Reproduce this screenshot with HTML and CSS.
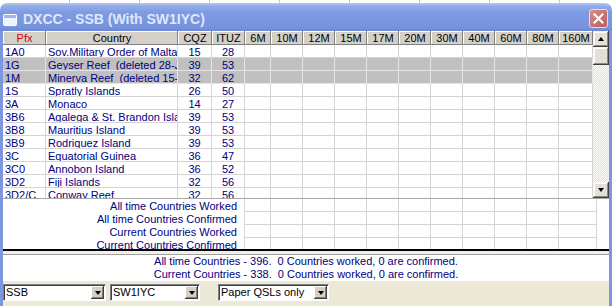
FILE: index.html
```html
<!DOCTYPE html>
<html>
<head>
<meta charset="utf-8">
<title>DXCC - SSB</title>
<link rel="stylesheet" href="styles.css">
</head>
<body>
<div class="backdrop"></div>
<div class="window">
  <div class="titlebar">
    <svg class="app-icon" width="14" height="12" viewBox="0 0 14 12">
      <rect x="0.5" y="0.5" width="13" height="11" rx="1" fill="#eef3fc" stroke="#ffffff"/>
      <rect x="1" y="1" width="12" height="3" fill="#9fb8ee"/>
    </svg>
    <span class="title">DXCC - SSB (With SW1IYC)</span>
    <div class="close">
      <svg width="11" height="11" viewBox="0 0 11 11"><path d="M1.5 1.5 L9.5 9.5 M9.5 1.5 L1.5 9.5" stroke="#ffffff" stroke-width="2.2" stroke-linecap="square"/></svg>
    </div>
  </div>
  <div class="frame">
    <div class="main">
      <div class="grid">
        <div class="row head">
          <div class="h pfx">Pfx</div><div class="h">Country</div><div class="h">CQZ</div><div class="h">ITUZ</div>
          <div class="h">6M</div><div class="h">10M</div><div class="h">12M</div><div class="h">15M</div><div class="h">17M</div><div class="h">20M</div><div class="h">30M</div><div class="h">40M</div><div class="h">60M</div><div class="h">80M</div><div class="h">160M</div>
        </div>
        <div class="row"><div class="c">1A0</div><div class="c">Sov.Military Order of Malta</div><div class="c n">15</div><div class="c n">28</div><div class="c"></div><div class="c"></div><div class="c"></div><div class="c"></div><div class="c"></div><div class="c"></div><div class="c"></div><div class="c"></div><div class="c"></div><div class="c"></div><div class="c"></div></div>
        <div class="row sel"><div class="c">1G</div><div class="c">Geyser Reef&nbsp; (deleted 28-Jun-1974)</div><div class="c n">39</div><div class="c n">53</div><div class="c"></div><div class="c"></div><div class="c"></div><div class="c"></div><div class="c"></div><div class="c"></div><div class="c"></div><div class="c"></div><div class="c"></div><div class="c"></div><div class="c"></div></div>
        <div class="row sel"><div class="c">1M</div><div class="c">Minerva Reef&nbsp; (deleted 15-Jun-1972)</div><div class="c n">32</div><div class="c n">62</div><div class="c"></div><div class="c"></div><div class="c"></div><div class="c"></div><div class="c"></div><div class="c"></div><div class="c"></div><div class="c"></div><div class="c"></div><div class="c"></div><div class="c"></div></div>
        <div class="row"><div class="c">1S</div><div class="c">Spratly Islands</div><div class="c n">26</div><div class="c n">50</div><div class="c"></div><div class="c"></div><div class="c"></div><div class="c"></div><div class="c"></div><div class="c"></div><div class="c"></div><div class="c"></div><div class="c"></div><div class="c"></div><div class="c"></div></div>
        <div class="row"><div class="c">3A</div><div class="c">Monaco</div><div class="c n">14</div><div class="c n">27</div><div class="c"></div><div class="c"></div><div class="c"></div><div class="c"></div><div class="c"></div><div class="c"></div><div class="c"></div><div class="c"></div><div class="c"></div><div class="c"></div><div class="c"></div></div>
        <div class="row"><div class="c">3B6</div><div class="c">Agalega &amp; St. Brandon Islands</div><div class="c n">39</div><div class="c n">53</div><div class="c"></div><div class="c"></div><div class="c"></div><div class="c"></div><div class="c"></div><div class="c"></div><div class="c"></div><div class="c"></div><div class="c"></div><div class="c"></div><div class="c"></div></div>
        <div class="row"><div class="c">3B8</div><div class="c">Mauritius Island</div><div class="c n">39</div><div class="c n">53</div><div class="c"></div><div class="c"></div><div class="c"></div><div class="c"></div><div class="c"></div><div class="c"></div><div class="c"></div><div class="c"></div><div class="c"></div><div class="c"></div><div class="c"></div></div>
        <div class="row"><div class="c">3B9</div><div class="c">Rodriquez Island</div><div class="c n">39</div><div class="c n">53</div><div class="c"></div><div class="c"></div><div class="c"></div><div class="c"></div><div class="c"></div><div class="c"></div><div class="c"></div><div class="c"></div><div class="c"></div><div class="c"></div><div class="c"></div></div>
        <div class="row"><div class="c">3C</div><div class="c">Equatorial Guinea</div><div class="c n">36</div><div class="c n">47</div><div class="c"></div><div class="c"></div><div class="c"></div><div class="c"></div><div class="c"></div><div class="c"></div><div class="c"></div><div class="c"></div><div class="c"></div><div class="c"></div><div class="c"></div></div>
        <div class="row"><div class="c">3C0</div><div class="c">Annobon Island</div><div class="c n">36</div><div class="c n">52</div><div class="c"></div><div class="c"></div><div class="c"></div><div class="c"></div><div class="c"></div><div class="c"></div><div class="c"></div><div class="c"></div><div class="c"></div><div class="c"></div><div class="c"></div></div>
        <div class="row"><div class="c">3D2</div><div class="c">Fiji Islands</div><div class="c n">32</div><div class="c n">56</div><div class="c"></div><div class="c"></div><div class="c"></div><div class="c"></div><div class="c"></div><div class="c"></div><div class="c"></div><div class="c"></div><div class="c"></div><div class="c"></div><div class="c"></div></div>
        <div class="row"><div class="c">3D2/C</div><div class="c">Conway Reef</div><div class="c n">32</div><div class="c n">56</div><div class="c"></div><div class="c"></div><div class="c"></div><div class="c"></div><div class="c"></div><div class="c"></div><div class="c"></div><div class="c"></div><div class="c"></div><div class="c"></div><div class="c"></div></div>
      </div>
      <div class="vscroll">
        <div class="sbtn"><span class="tri up"></span></div>
        <div class="thumb"></div>
        <div class="track"></div>
        <div class="sbtn"><span class="tri down"></span></div>
      </div>
    </div>
    <div class="summary">
      <div class="srow"><div class="lbl">All time Countries Worked</div><div class="c"></div><div class="c"></div><div class="c"></div><div class="c"></div><div class="c"></div><div class="c"></div><div class="c"></div><div class="c"></div><div class="c"></div><div class="c"></div><div class="c"></div><div class="blank"></div></div>
      <div class="srow"><div class="lbl">All time Countries Confirmed</div><div class="c"></div><div class="c"></div><div class="c"></div><div class="c"></div><div class="c"></div><div class="c"></div><div class="c"></div><div class="c"></div><div class="c"></div><div class="c"></div><div class="c"></div><div class="blank"></div></div>
      <div class="srow"><div class="lbl">Current Countries Worked</div><div class="c"></div><div class="c"></div><div class="c"></div><div class="c"></div><div class="c"></div><div class="c"></div><div class="c"></div><div class="c"></div><div class="c"></div><div class="c"></div><div class="c"></div><div class="blank"></div></div>
      <div class="srow"><div class="lbl">Current Countries Confirmed</div><div class="c"></div><div class="c"></div><div class="c"></div><div class="c"></div><div class="c"></div><div class="c"></div><div class="c"></div><div class="c"></div><div class="c"></div><div class="c"></div><div class="c"></div><div class="blank"></div></div>
    </div>
    <div class="rule"></div>
    <div class="gap"></div>
    <div class="status">
      <div>All time Countries - 396.&nbsp; 0 Countries worked, 0 are confirmed.</div>
      <div>Current Countries - 338.&nbsp; 0 Countries worked, 0 are confirmed.</div>
    </div>
    <div class="toolbar">
      <div class="combo w1"><span class="val">SSB</span><span class="dd"><span class="tri down"></span></span></div>
      <div class="combo w2"><span class="val">SW1IYC</span><span class="dd"><span class="tri down"></span></span></div>
      <div class="combo w3"><span class="val">Paper QSLs only</span><span class="dd"><span class="tri down"></span></span></div>
    </div>
  </div>
</div>
</body>
</html>
```

FILE: styles.css
```css
* { box-sizing: border-box; }
html, body { margin: 0; padding: 0; }
body {
  width: 612px;
  height: 306px;
  overflow: hidden;
  background: #ffffff;
  font-family: "Liberation Sans", Arial, sans-serif;
  font-size: 11px;
}
.backdrop {
  height: 3px;
  background: repeating-linear-gradient(to right, #ffffff 0 69px, #c8c8c8 69px 70px);
}
.window {
  width: 612px;
}
.titlebar {
  height: 28px;
  border-radius: 7px 7px 0 0;
  background: linear-gradient(to bottom, #b3c8f2 0px, #94ade9 3px, #7f9be3 9px, #7a96e0 18px, #7893df 24px, #6c87d5 28px);
  display: flex;
  align-items: center;
  padding: 0 4px 0 3px;
}
.app-icon { flex: none; margin-top: 6px; }
.title {
  margin-left: 6px;
  margin-top: 4px;
  color: #dfe8fa;
  font-weight: bold;
  font-size: 14px;
  flex: 1;
  white-space: nowrap;
}
.close {
  width: 19px;
  height: 19px;
  margin-top: 2px;
  border-radius: 3px;
  border: 1px solid #f2d6d6;
  background: linear-gradient(135deg, #d89090 0%, #c5706f 55%, #b96262 100%);
  display: flex;
  align-items: center;
  justify-content: center;
}
.frame {
  border-left: 3px solid #7c97df;
  border-right: 3px solid #7c97df;
  height: 275px;
  display: flex;
  flex-direction: column;
}
.main {
  display: flex;
  height: 167px;
  background: #ffffff;
}
.grid {
  width: 590px;
  height: 167px;
  overflow: hidden;
}
.row {
  display: grid;
  grid-template-columns: 43px 132px 34px 33px 26px repeat(9, 32px) 34px;
  height: 13px;
}
.row.head { height: 14px; }
.h {
  background: #d4d0c8;
  box-shadow: inset -1px -1px #808080, inset 1px 1px #ffffff;
  color: #000000;
  text-align: center;
  line-height: 14px;
  white-space: nowrap;
  overflow: hidden;
}
.h.pfx { color: #d40000; }
.c {
  border-right: 1px solid #d4d4d4;
  border-bottom: 1px solid #d4d4d4;
  color: #000080;
  padding: 1px 0 0 2px;
  line-height: 12px;
  white-space: nowrap;
  overflow: hidden;
  text-overflow: clip;
}
.c.n { text-align: center; padding-left: 0; }
.row.sel .c {
  background: #c0c0c0;
  border-color: #e4e4e4;
}
.vscroll {
  width: 16px;
  display: flex;
  flex-direction: column;
}
.sbtn, .thumb {
  background: #e3e0d6;
  box-shadow: inset -1px -1px #404040, inset 1px 1px #f4f3ee, inset -2px -2px #8c8a82, inset 2px 2px #ffffff;
}
.sbtn {
  height: 16px;
  display: flex;
  align-items: center;
  justify-content: center;
}
.thumb { height: 18px; }
.track {
  flex: 1;
  background: repeating-conic-gradient(#e4e1d6 0 25%, #fbfaf6 0 50%) 0 0 / 2px 2px;
}
.tri {
  width: 0;
  height: 0;
  border-left: 3.5px solid transparent;
  border-right: 3.5px solid transparent;
}
.tri.up { border-bottom: 4px solid #000000; }
.tri.down { border-top: 4px solid #000000; }
.summary {
  height: 51px;
  border-top: 1px solid #a8a8a8;
  overflow: hidden;
  background: #ffffff;
}
.srow {
  display: grid;
  grid-template-columns: 242px 26px repeat(9, 32px) 38px 12px;
  height: 13px;
}
.lbl {
  border-right: 1px solid #d4d4d4;
  color: #000080;
  text-align: right;
  padding: 1px 7px 0 0;
  line-height: 12px;
  white-space: nowrap;
}
.rule {
  height: 2px;
  background: #000000;
}
.gap {
  height: 4px;
  background: #f1efe6;
  border-bottom: 1px solid #a0a0a0;
}
.status {
  height: 26px;
  background: #ffffff;
  color: #000080;
  text-align: center;
  line-height: 13px;
  white-space: nowrap;
}
.toolbar {
  flex: 1;
  background: #ece9d8;
  display: flex;
  align-items: flex-start;
  padding-top: 3px;
  gap: 4px;
}
.combo {
  height: 17px;
  background: #ffffff;
  border-top: 1px solid #808080;
  border-left: 1px solid #808080;
  border-right: 1px solid #ffffff;
  border-bottom: 1px solid #ffffff;
  box-shadow: inset 1px 1px #404040;
  display: flex;
  align-items: center;
  justify-content: space-between;
  padding: 1px 1px 1px 2px;
  color: #000000;
}
.combo .val { line-height: 13px; white-space: nowrap; }
.combo.w1 { width: 103px; }
.combo.w2 { width: 90px; }
.combo.w3 { width: 111px; margin-left: 14px; }
.dd {
  width: 13px;
  height: 13px;
  background: #d4d0c8;
  box-shadow: inset -1px -1px #404040, inset 1px 1px #ffffff, inset -2px -2px #808080;
  display: flex;
  align-items: center;
  justify-content: center;
}
```
